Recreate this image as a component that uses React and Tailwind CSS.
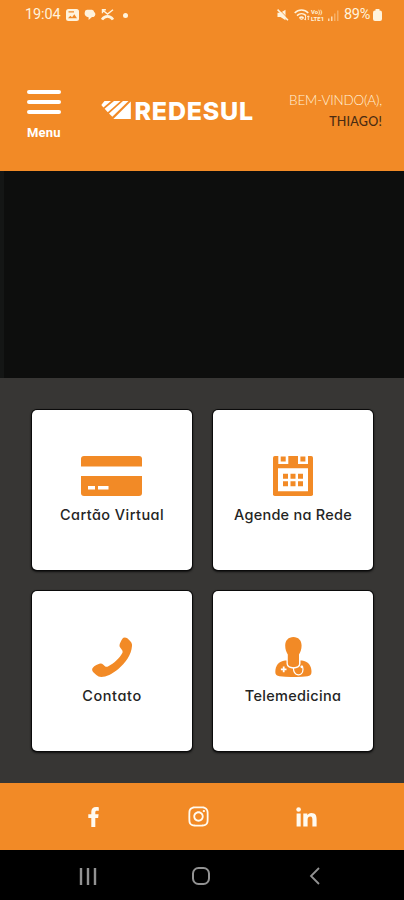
import { FaInstagram } from 'react-icons/fa';

function StatusBar() {
  return (
    <div className="flex h-7 items-center pt-0.5 pl-[25px] pr-[22px] font-['Roboto'] text-[#fff3dc]">
      <span className="w-9 text-[14.5px] leading-none tracking-[-0.1px]">19:04</span>
      <svg className="ml-[5px] h-3 w-[13px]" viewBox="0 0 13 12">
        <rect width="13" height="12" rx="2.5" fill="currentColor" />
        <path d="M2 9.3l2.3-2.6 1.8 1.5L8.3 5.2 11 9.3zM2.5 2.2h5.5v1.3h-5.5z" fill="#f28a26" />
      </svg>
      <svg className="ml-[5px] h-3 w-3" viewBox="0 0 12 12" fill="currentColor">
        <path d="M3 0.8h5a2.6 2.6 0 0 1 2.2 2.1A3 3 0 0 1 9.6 8H8l-3.4 3V8.2A3.8 3.8 0 0 1 0.8 3.4 2.6 2.6 0 0 1 3 0.8z" />
      </svg>
      <svg className="ml-[5px] h-3 w-[13px]" viewBox="0 0 13 12" fill="none" stroke="currentColor">
        <path d="M1.5 1l5 4L12 0.8M1.5 4.2V0.8h3.4" strokeWidth="1.4" />
        <path d="M1 10.6c2.8-4.2 8.2-4.2 11 0" strokeWidth="2.7" />
      </svg>
      <span className="ml-[9px] h-[5px] w-[5px] rounded-full bg-current" />

      <svg className="ml-auto h-3 w-3" viewBox="0 0 12 12" fill="currentColor">
        <path d="M0.5 3.8h3L8.5 0.8v10.4L3.5 8h-3z" />
        <path d="M1.6 0L12 10.6" stroke="#f28a26" strokeWidth="1" />
        <path d="M0.6 0.6L11 11.2" stroke="currentColor" strokeWidth="1.5" />
      </svg>
      <svg className="ml-[5px] h-3 w-4" viewBox="0 0 16 12" fill="none" stroke="currentColor">
        <path d="M0.7 4c3.9-4 9.7-4 13.6 0M3 6.6c2.7-2.6 6.3-2.6 9 0M5.4 8.8c1.3-1.1 2.9-1.1 4.2 0" strokeWidth="1.5" />
        <path d="M7.5 11l-1.8-2h3.6zM11.5 7v4m-1.5-1.4l1.5 1.6M14.3 11V7m-1.2 1.2l1.2-1.4 1.2 1.4" strokeWidth="0.9" />
      </svg>
      <span className="ml-[1px] flex w-[15px] flex-col text-[6px] leading-[7px] font-bold">
        <span>Vo))</span>
        <span>LTE1</span>
      </span>
      <svg className="ml-[2px] h-[11px] w-[11px]" viewBox="0 0 11 11" fill="currentColor">
        <path d="M0 8.5h1.5V11H0zM3 6.5h1.5V11H3z" opacity="0.75" />
        <path d="M6 3.5h1.5V11H6zM9 0.5h1.5V11H9z" opacity="0.35" />
      </svg>
      <span className="ml-[5px] w-[28px] text-[14.5px] leading-none tracking-[-0.3px]">89%</span>
      <svg className="ml-[1px] h-3 w-[9px]" viewBox="0 0 9 12" fill="currentColor">
        <rect y="1.5" width="9" height="10.5" rx="2" />
        <rect x="2.5" width="4" height="2" rx="0.5" />
      </svg>
    </div>
  );
}

function Logo() {
  return (
    <div className="flex h-[18px] items-center text-white">
      <svg className="h-[18px] w-[30px]" viewBox="0 0 30 18" fill="currentColor">
        <path d="M3.5 0H10L2.4 6.5 0.3 4z" />
        <path d="M13 0h6.5L6.8 11.2 3.6 7.8z" />
        <path d="M22 0h5.5L11.3 15.8 8 12.4z" />
        <path d="M29.8 0.5V18H12.3z" />
      </svg>
      <span className="mt-px ml-[3.5px] font-['Inter'] text-[25px] leading-[18px] font-extrabold tracking-[0.8px]">
        REDESUL
      </span>
    </div>
  );
}

function Header() {
  return (
    <header className="flex h-[143px] items-start pt-[62px] pl-[27px] pr-[22px]">
      <button className="flex w-[34px] flex-col text-white">
        <span className="h-[3.5px] rounded-full bg-white" />
        <span className="mt-[6.5px] h-[3.5px] rounded-full bg-white" />
        <span className="mt-[6.5px] h-[3.5px] rounded-full bg-white" />
        <span className="mt-[11px] text-left font-['Roboto'] text-[13px] leading-4 font-bold tracking-[0.2px]">
          Menu
        </span>
      </button>
      <div className="mt-[11px] ml-10">
        <Logo />
      </div>
      <div className="ml-auto flex flex-col items-end font-['Lato'] leading-[21px] whitespace-nowrap">
        <p className="text-[13.5px] font-light tracking-[-0.2px] text-[#fff0d8]">BEM-VINDO(A),</p>
        <p className="text-[12.5px] font-medium tracking-[0.2px] text-[#4a2b12]">THIAGO!</p>
      </div>
    </header>
  );
}

function CardIcon() {
  return (
    <svg className="h-10 w-[61px] -translate-x-px" viewBox="0 0 61 40" fill="currentColor">
      <path d="M3 0h55a3 3 0 0 1 3 3v7.5H0V3a3 3 0 0 1 3-3z" />
      <path d="M0 20h61v17a3 3 0 0 1-3 3H3a3 3 0 0 1-3-3z" />
      <path d="M7 30h7v3.5H7zM17 30h10.5v3.5H17z" fill="#fff" />
    </svg>
  );
}

function CalendarIcon() {
  return (
    <svg className="h-10 w-10" viewBox="0 0 40 40" fill="currentColor">
      <rect width="40" height="40" rx="1.8" />
      <path d="M5.3 0h10v8h-10zM25 0h10v8H25zM5 12.3h30v22.9H5z" fill="#fff" />
      <path d="M7.7 0.4h5v5h-5zM27.4 0.4h5v5h-5z" />
      <path d="M10 17.7h5v5h-5zM17.5 17.7h5v5h-5zM25 17.7h5v5h-5zM10 25.2h5v5h-5zM17.5 25.2h5v5h-5zM25 25.2h5v5h-5z" />
    </svg>
  );
}

function PhoneIcon() {
  return (
    <svg className="h-10 w-10" viewBox="0 0 120 120" fill="currentColor">
      <path d="M92 3q7-4 14 1l9 9q6 6 5 14c-2 27-19 50-41 69-18 15-37 24-51 24q-9 0-15-6l-9-8q-6-7-2-13 4-6 11-9l9-4q7-2 12 3l5 5q4 3 10 0c17-9 33-24 42-40q2-5-1-9l-6-8q-3-5 0-12 3-9 9-16z" />
    </svg>
  );
}

function DoctorIcon() {
  return (
    <svg className="h-10 w-[37px]" viewBox="0 0 37 40" fill="currentColor">
      <path d="M10 23.5h17c6 0.7 9.5 5 9.5 11.5 0 2.8-1.5 3.8-4 4.2-8.5 1.1-19 1.1-28 0C1.8 38.8 0.3 37.5 0.3 35c0-6.5 3.5-10.8 9.7-11.5z" />
      <path d="M12.3 21.5v5.3c0 5.5 12.4 5.5 12.4 0v-5.3" fill="none" stroke="#fff" strokeWidth="1.6" />
      <path d="M18.4 0c5 0 8.2 3.5 8.2 8.5 0 4-1.3 6.8-2.6 9V26c0 4.5-11.2 4.5-11.2 0v-8.5c-1.5-2.5-2.6-5-2.6-9C10.2 3.5 13.4 0 18.4 0z" />
      <path d="M18.4 30.4c0 9.6 9.6 9.6 9.6 1.8 0-2.2-0.6-2.6-1.4-3.2" fill="none" stroke="#fff" strokeWidth="1.2" />
      <path d="M8.7 29.6v5.6M5.9 32.4h5.6" stroke="#fff" strokeWidth="1.8" />
      <circle cx="26.8" cy="29.8" r="1.4" fill="#fff" />
    </svg>
  );
}

const tiles = [
  { label: 'Cartão Virtual', Icon: CardIcon, tracking: 'tracking-[0.45px]' },
  { label: 'Agende na Rede', Icon: CalendarIcon, tracking: 'tracking-[0.25px]' },
  { label: 'Contato', Icon: PhoneIcon, tracking: 'tracking-[0.6px]' },
  { label: 'Telemedicina', Icon: DoctorIcon, tracking: 'tracking-[0.3px]' }
];

function Tile({ label, Icon, tracking }) {
  return (
    <button className="flex h-40 w-40 flex-col items-center rounded-[5px] bg-white pt-[46px] text-[#f28a26] shadow-[0_0_0_1px_#0b0b0b,0_1px_2px_1px_#111]">
      <Icon />
      <span
        className={`mt-[8px] font-['Inter'] text-[14.5px] leading-[22px] font-medium whitespace-nowrap text-[#242424] [font-feature-settings:'cv11'] ${tracking}`}
      >
        {label}
      </span>
    </button>
  );
}

function FacebookIcon() {
  return (
    <svg className="h-5 w-[11px]" viewBox="0 0 11 20" fill="currentColor">
      <path d="M10.8 0.2v3.5H9C7.6 3.7 7.3 4.4 7.3 5.4v1.9h3.3l-0.5 3.6H7.3V20H3.3v-9.1H0.3V7.3h3V4.8C3.3 1.7 5.1 0 8 0c1.3 0 2.4 0.1 2.8 0.2z" />
    </svg>
  );
}

function LinkedinIcon() {
  return (
    <svg className="h-5 w-[21px]" viewBox="0 0 21 20" fill="currentColor">
      <circle cx="2.6" cy="2.5" r="2.3" />
      <path d="M0.6 6.4h4.1V19.5H0.6zM7.3 6.4h4v1.8c0.6-1.1 2-2.2 4.1-2.2 4.3 0 5.2 2.8 5.2 6.4v7.1h-4.2v-6.4c0-1.6 0-3.5-2.1-3.5s-2.7 1.6-2.7 3.4v6.5H7.3z" />
    </svg>
  );
}

function SocialBar() {
  return (
    <footer className="flex h-[67px] items-center justify-between bg-[#f28a26] pr-[87px] pl-[88px] text-[#fffaf0]">
      <FacebookIcon />
      <FaInstagram className="ml-px h-[23px] w-[23px]" />
      <LinkedinIcon />
    </footer>
  );
}

function NavigationBar() {
  return (
    <nav className="flex h-[50px] items-center bg-black pt-0.5 pl-[79px] text-[#929292]">
      <svg className="h-[17px] w-[18px]" viewBox="0 0 18 17" fill="none" stroke="currentColor" strokeWidth="2.4">
        <path d="M2 0v17M9 0v17M16 0v17" />
      </svg>
      <span className="ml-[95px] h-[18px] w-[18px] rounded-[6.5px] border-2 border-current" />
      <svg className="ml-[99px] h-[18px] w-[11px]" viewBox="0 0 11 18" fill="none" stroke="currentColor" strokeWidth="1.8">
        <path d="M10 1L2 9l8 8" />
      </svg>
    </nav>
  );
}

export default function App() {
  return (
    <div className="flex h-[900px] w-[404px] flex-col overflow-hidden bg-[#373634] font-['Lato',sans-serif]">
      <div className="bg-[#f28a26]">
        <StatusBar />
        <Header />
      </div>
      <div className="h-[207px] border-l-4 border-[#141615] bg-[#0d0e0d]" />
      <main className="grid flex-1 grid-cols-[160px_160px] content-start gap-[21px] pt-8 pl-8">
        {tiles.map((tile) => (
          <Tile key={tile.label} {...tile} />
        ))}
      </main>
      <SocialBar />
      <NavigationBar />
    </div>
  );
}
